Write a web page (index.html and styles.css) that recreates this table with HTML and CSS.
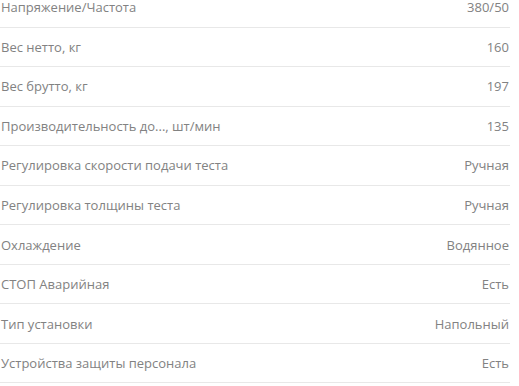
FILE: index.html
```html
<!DOCTYPE html>
<html lang="ru">
<head>
<meta charset="utf-8">
<link rel="stylesheet" href="styles.css">
</head>
<body>
<div class="specs">
  <div class="row"><span class="name">Напряжение/Частота</span><span class="val">380/50</span></div>
  <div class="row"><span class="name">Вес нетто, кг</span><span class="val">160</span></div>
  <div class="row"><span class="name">Вес брутто, кг</span><span class="val">197</span></div>
  <div class="row"><span class="name">Производительность до..., шт/мин</span><span class="val">135</span></div>
  <div class="row"><span class="name">Регулировка скорости подачи теста</span><span class="val">Ручная</span></div>
  <div class="row"><span class="name">Регулировка толщины теста</span><span class="val">Ручная</span></div>
  <div class="row"><span class="name">Охлаждение</span><span class="val">Водянное</span></div>
  <div class="row"><span class="name">СТОП Аварийная</span><span class="val">Есть</span></div>
  <div class="row"><span class="name">Тип установки</span><span class="val">Напольный</span></div>
  <div class="row"><span class="name">Устройства защиты персонала</span><span class="val">Есть</span></div>
</div>
</body>
</html>
```

FILE: styles.css
```css
html, body {
  margin: 0;
  padding: 0;
  background: #fff;
}
.specs {
  width: 510px;
  margin-top: -12px;
  font-family: "Open Sans", "Liberation Sans", sans-serif;
  font-size: 13px;
  color: #828282;
}
.row {
  box-sizing: border-box;
  height: 39.56px;
  display: flex;
  justify-content: space-between;
  align-items: center;
  padding: 0 1px 0 1px;
  border-bottom: 1px solid #e8e8e8;
}
```
